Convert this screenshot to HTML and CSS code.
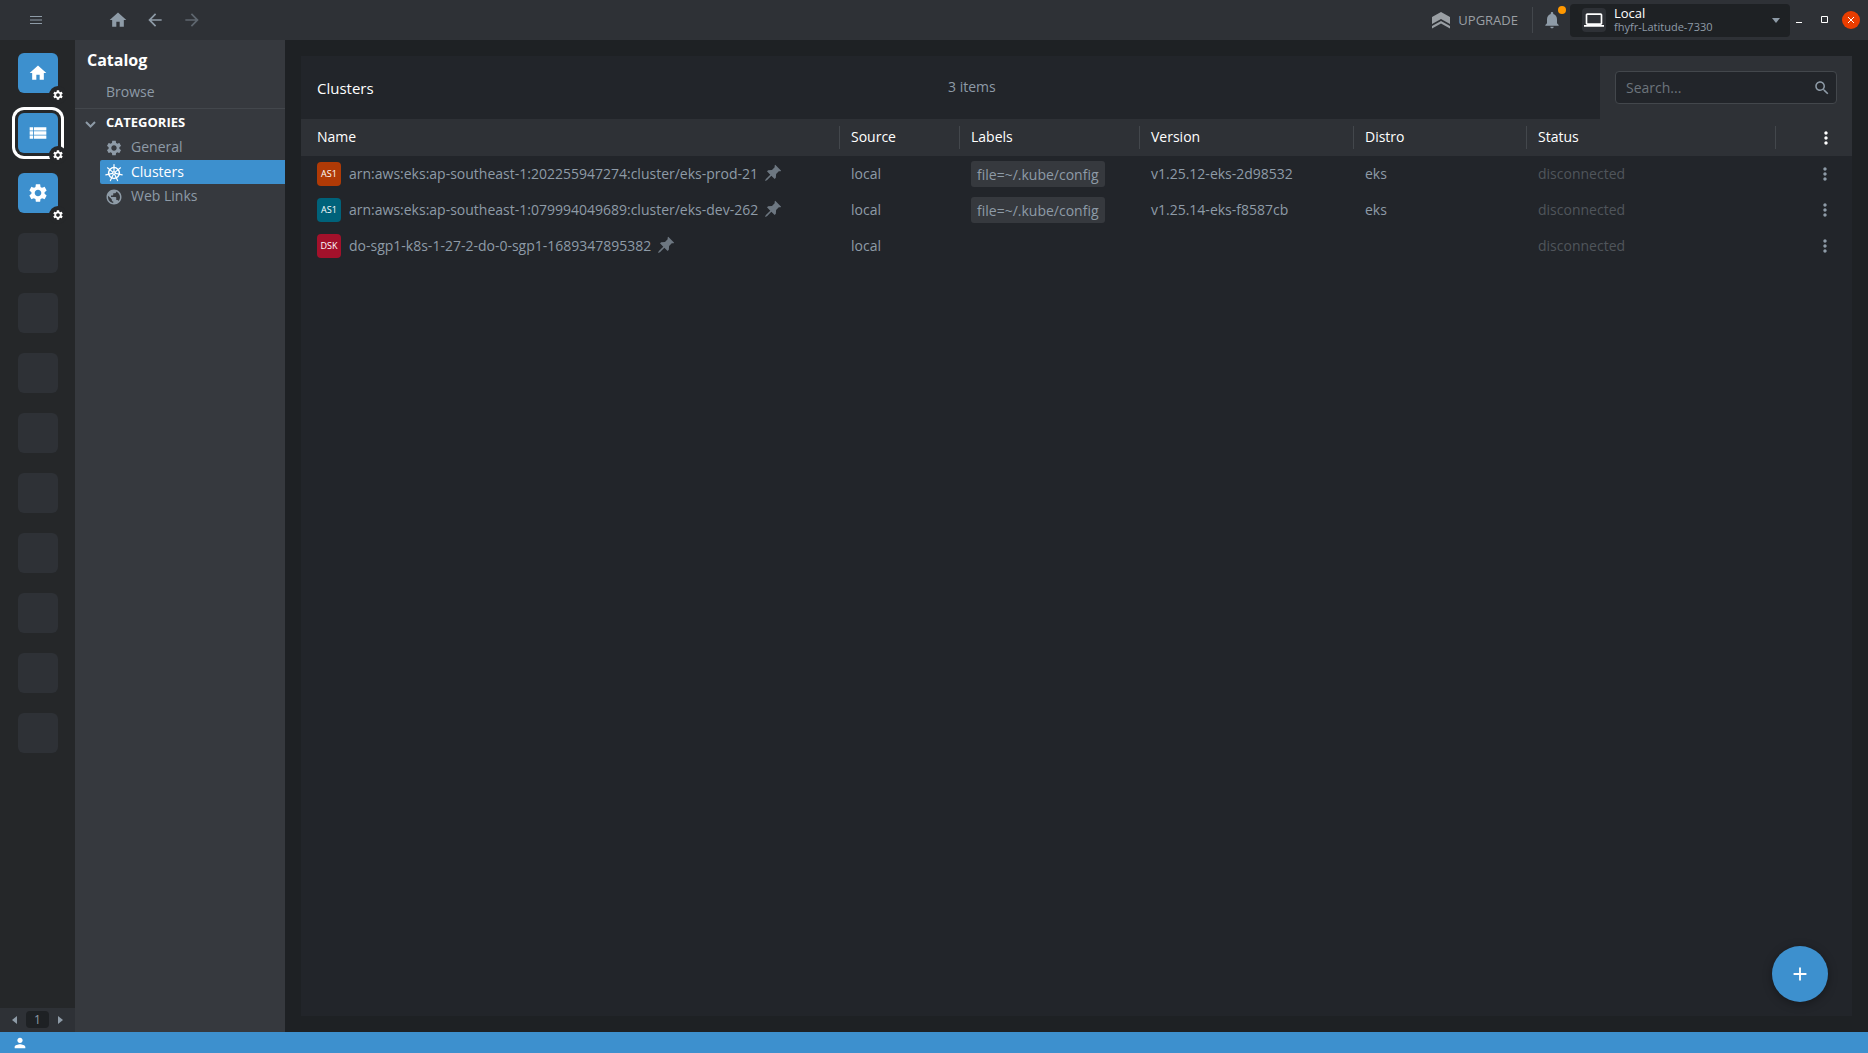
FILE: index.html
```html
<!DOCTYPE html>
<html lang="en">
<head>
<meta charset="utf-8">
<title>Catalog - Clusters</title>
<link rel="stylesheet" href="styles.css">
</head>
<body>
<svg class="defs" aria-hidden="true">
  <symbol id="home" viewBox="0 0 24 24"><path d="M10 20v-6h4v6h5v-8h3L12 3 2 12h3v8z"/></symbol>
  <symbol id="gear" viewBox="0 0 24 24"><path d="M19.14 12.94c.04-.3.06-.61.06-.94 0-.32-.02-.64-.07-.94l2.03-1.58c.18-.14.23-.41.12-.61l-1.92-3.32c-.12-.22-.37-.29-.59-.22l-2.39.96c-.5-.38-1.03-.7-1.62-.94l-.36-2.54c-.04-.24-.24-.41-.48-.41h-3.84c-.24 0-.43.17-.47.41l-.36 2.54c-.59.24-1.13.57-1.62.94l-2.39-.96c-.22-.08-.47 0-.59.22L2.74 8.87c-.12.21-.08.47.12.61l2.03 1.58c-.05.3-.09.63-.09.94s.02.64.07.94l-2.03 1.58c-.18.14-.23.41-.12.61l1.92 3.32c.12.22.37.29.59.22l2.39-.96c.5.38 1.03.7 1.62.94l.36 2.54c.05.24.24.41.48.41h3.84c.24 0 .44-.17.47-.41l.36-2.54c.59-.24 1.13-.56 1.62-.94l2.39.96c.22.08.47 0 .59-.22l1.92-3.32c.12-.22.07-.47-.12-.61l-2.01-1.58zM12 15.6c-1.98 0-3.6-1.62-3.6-3.6s1.62-3.6 3.6-3.6 3.6 1.62 3.6 3.6-1.62 3.6-3.6 3.6z"/></symbol>
  <symbol id="list" viewBox="0 0 24 24"><path d="M2 9h4V5H2v4zm0 5h4v-4H2v4zm0 5h4v-4H2v4zm5-5h15v-4H7v4zm0 5h15v-4H7v4zM7 5v4h15V5H7z"/></symbol>
  <symbol id="pin" viewBox="0 0 24 24"><path transform="rotate(45 12 12)" d="M15.500 8.500V4l1.500-1.500V1.500H7v1L8.500 4v4.500L5.500 12v2h5.600v7.500L12 24l.900-2.500V14h5.600v-2z"/></symbol>
  <symbol id="more" viewBox="0 0 24 24"><path d="M12 8c1.1 0 2-.9 2-2s-.9-2-2-2-2 .9-2 2 .9 2 2 2zm0 2c-1.1 0-2 .9-2 2s.9 2 2 2 2-.9 2-2-.9-2-2-2zm0 6c-1.1 0-2 .9-2 2s.9 2 2 2 2-.9 2-2-.9-2-2-2z"/></symbol>
</svg>
<div class="app">
  <header class="topbar">
    <button class="icon-btn menu-btn" aria-label="Menu"><svg class="i12" viewBox="0 0 12 8"><path d="M0 .5h12M0 4h12M0 7.500h12" fill="none" stroke="currentColor"/></svg></button>
    <nav class="history">
      <button class="icon-btn" aria-label="Home"><svg class="i20"><use href="#home"/></svg></button>
      <button class="icon-btn" aria-label="Back"><svg class="i20" viewBox="0 0 24 24"><path d="M20 11H7.830l5.590-5.590L12 4l-8 8 8 8 1.410-1.410L7.830 13H20v-2z"/></svg></button>
      <button class="icon-btn dim" aria-label="Forward"><svg class="i20" viewBox="0 0 24 24"><path d="M12 4l-1.410 1.410L16.170 11H4v2h12.170l-5.580 5.590L12 20l8-8z"/></svg></button>
    </nav>
    <button class="icon-btn upgrade"><svg class="i20" viewBox="0 0 20 20"><path d="M10 2l9 5v7l-9-5-9 5V7z"/><path d="M10 11l9 5v2.500l-9-5-9 5V16z"/></svg><span>UPGRADE</span></button>
    <button class="icon-btn bell" aria-label="Notifications"><svg class="i20" viewBox="0 0 24 24"><path d="M12 22c1.100 0 2-.900 2-2h-4c0 1.100.900 2 2 2zm6-6v-5c0-3.070-1.630-5.640-4.500-6.320V4c0-.830-.670-1.500-1.500-1.500s-1.500.670-1.500 1.500v.680C7.640 5.360 6 7.920 6 11v5l-2 2v1h16v-1l-2-2z"/></svg><i class="dot"></i></button>
    <button class="host">
      <span class="host-icon"><svg class="i20" viewBox="0 0 24 24"><path d="M20 18c1.100 0 1.990-.900 1.990-2L22 6c0-1.100-.900-2-2-2H4c-1.100 0-2 .900-2 2v10c0 1.100.900 2 2 2H0v2h24v-2h-4zM4 6h16v10H4V6z"/></svg></span>
      <span class="host-text"><span class="host-name">Local</span><span class="host-sub">fhyfr-Latitude-7330</span></span>
      <svg class="caret" viewBox="0 0 8 5"><path d="M0 0h8L4 5z"/></svg>
    </button>
    <div class="window-controls">
      <button class="icon-btn" aria-label="Minimize"><svg class="i8" viewBox="0 0 8 8"><path d="M1 6h6v1H1z"/></svg></button>
      <button class="icon-btn maximize" aria-label="Maximize"><svg class="i8" viewBox="0 0 8 8"><path d="M.500.500h6v6h-6z" fill="none" stroke="currentColor"/></svg></button>
      <button class="icon-btn close" aria-label="Close"><svg class="i8" viewBox="0 0 8 8"><path d="M1 1l6 6M7 1L1 7" fill="none" stroke="currentColor"/></svg></button>
    </div>
  </header>

  <div class="body">
    <aside class="hotbar">
      <div class="hotbar-items">
        <div class="slot"><button class="tile" aria-label="Welcome"><svg class="i20"><use href="#home"/></svg></button><span class="badge"><svg class="i12"><use href="#gear"/></svg></span></div>
        <div class="slot"><button class="tile active" aria-label="Catalog"><svg class="i20"><use href="#list"/></svg></button><span class="badge"><svg class="i12"><use href="#gear"/></svg></span></div>
        <div class="slot"><button class="tile" aria-label="Preferences"><svg class="i22"><use href="#gear"/></svg></button><span class="badge"><svg class="i12"><use href="#gear"/></svg></span></div>
        <div class="slot empty"></div><div class="slot empty"></div><div class="slot empty"></div>
        <div class="slot empty"></div><div class="slot empty"></div><div class="slot empty"></div>
        <div class="slot empty"></div><div class="slot empty"></div><div class="slot empty"></div>
      </div>
      <div class="pager">
        <button class="icon-btn" aria-label="Previous"><svg class="arrow" viewBox="0 0 5 8"><path d="M5 0v8L0 4z"/></svg></button>
        <span class="page">1</span>
        <button class="icon-btn" aria-label="Next"><svg class="arrow" viewBox="0 0 5 8"><path d="M0 0v8l5-4z"/></svg></button>
      </div>
    </aside>

    <nav class="sidebar">
      <h1>Catalog</h1>
      <a class="browse" href="#">Browse</a>
      <button class="group"><svg class="i16" viewBox="0 0 16 16"><path d="M3 8l4.500 4.500L12 8" fill="none" stroke="currentColor" stroke-width="2"/></svg><span>CATEGORIES</span></button>
      <ul>
        <li><a href="#"><svg class="i18"><use href="#gear"/></svg>General</a></li>
        <li><a class="selected" href="#"><svg class="i18" viewBox="0 0 18 18"><g fill="none" stroke="currentColor" stroke-linecap="round"><circle cx="9" cy="9" r="5.400" stroke-width="1.500"/><circle cx="9" cy="9" r="1.300"/><path stroke-width="1.200" d="M9 7.500V.600M10.200 8.100l5.300-4.300M10.500 9.300l6.700 1.600M9.700 10.400l2.900 6.200M8.300 10.400l-2.900 6.200M7.500 9.300L.800 10.900M7.800 8.100L2.500 3.800"/></g></svg>Clusters</a></li>
        <li><a href="#"><svg class="i18" viewBox="0 0 24 24"><path d="M12 2C6.480 2 2 6.480 2 12s4.480 10 10 10 10-4.480 10-10S17.520 2 12 2zm-1 17.930c-3.950-.490-7-3.850-7-7.930 0-.620.080-1.210.210-1.790L9 15v1c0 1.100.900 2 2 2v1.930zm6.900-2.540c-.260-.810-1-1.390-1.900-1.390h-1v-3c0-.550-.450-1-1-1H8v-2h2c.550 0 1-.450 1-1V7h2c1.100 0 2-.900 2-2v-.410c2.930 1.190 5 4.060 5 7.410 0 2.080-.800 3.970-2.100 5.390z"/></svg>Web Links</a></li>
      </ul>
    </nav>

    <main>
      <section class="panel">
        <div class="panel-head">
          <h2>Clusters</h2>
          <span class="count">3 items</span>
          <div class="search-area"><label class="search"><input type="text" placeholder="Search..." aria-label="Search"><svg class="i18" viewBox="0 0 24 24"><path d="M15.500 14h-.790l-.280-.270C15.410 12.590 16 11.110 16 9.500 16 5.910 13.090 3 9.500 3S3 5.910 3 9.500 5.910 16 9.500 16c1.610 0 3.090-.590 4.230-1.570l.270.280v.790l5 4.990L20.490 19l-4.990-5zm-6 0C7.010 14 5 11.990 5 9.500S7.010 5 9.500 5 14 7.010 14 9.500 11.990 14 9.500 14z"/></svg></label></div>
        </div>
        <table>
          <colgroup><col><col class="c-source"><col class="c-labels"><col class="c-version"><col class="c-distro"><col class="c-status"><col class="c-menu"></colgroup>
          <thead><tr><th><span>Name</span></th><th><span>Source</span></th><th><span>Labels</span></th><th><span>Version</span></th><th><span>Distro</span></th><th><span>Status</span></th><th><span class="menu-cell"><button class="icon-btn" aria-label="Columns"><svg class="i20"><use href="#more"/></svg></button></span></th></tr></thead>
          <tbody>
            <tr>
              <td><div class="name"><span class="avatar orange">AS1</span>arn:aws:eks:ap-southeast-1:202255947274:cluster/eks-prod-21<button class="icon-btn pin" aria-label="Pin"><svg class="i20"><use href="#pin"/></svg></button></div></td>
              <td>local</td><td><span class="label">file=~/.kube/config</span></td><td>v1.25.12-eks-2d98532</td><td>eks</td><td class="off">disconnected</td>
              <td><div class="menu-cell"><button class="icon-btn" aria-label="Actions"><svg class="i20"><use href="#more"/></svg></button></div></td>
            </tr>
            <tr>
              <td><div class="name"><span class="avatar teal">AS1</span>arn:aws:eks:ap-southeast-1:079994049689:cluster/eks-dev-262<button class="icon-btn pin" aria-label="Pin"><svg class="i20"><use href="#pin"/></svg></button></div></td>
              <td>local</td><td><span class="label">file=~/.kube/config</span></td><td>v1.25.14-eks-f8587cb</td><td>eks</td><td class="off">disconnected</td>
              <td><div class="menu-cell"><button class="icon-btn" aria-label="Actions"><svg class="i20"><use href="#more"/></svg></button></div></td>
            </tr>
            <tr>
              <td><div class="name"><span class="avatar red">DSK</span>do-sgp1-k8s-1-27-2-do-0-sgp1-1689347895382<button class="icon-btn pin" aria-label="Pin"><svg class="i20"><use href="#pin"/></svg></button></div></td>
              <td>local</td><td></td><td></td><td></td><td class="off">disconnected</td>
              <td><div class="menu-cell"><button class="icon-btn" aria-label="Actions"><svg class="i20"><use href="#more"/></svg></button></div></td>
            </tr>
          </tbody>
        </table>
        <button class="fab" aria-label="Add"><svg class="i22" viewBox="0 0 24 24"><path d="M19 13h-6v6h-2v-6H5v-2h6V5h2v6h6v2z"/></svg></button>
      </section>
    </main>
  </div>

  <footer class="statusbar"><button class="icon-btn" aria-label="Account"><svg class="i16" viewBox="0 0 24 24"><path d="M12 12c2.210 0 4-1.790 4-4s-1.790-4-4-4-4 1.790-4 4 1.790 4 4 4zm0 2c-2.670 0-8 1.340-8 4v2h16v-2c0-2.660-5.330-4-8-4z"/></svg></button></footer>
</div>
</body>
</html>
```
FILE: styles.css
```css
:root {
  --blue: #3d90ce;
  --bg: #1e2124;
  --panel: #22252a;
  --layout: #2e3136;
  --sidebar: #36393e;
  --border: #43474c;
  --text: #8e9ba7;
}

* { box-sizing: border-box; }

body {
  margin: 0;
  background: var(--bg);
  color: var(--text);
  font: 14px/20px "Open Sans", "Noto Sans", sans-serif;
}

button, input { font: inherit; color: inherit; }
svg { display: block; flex: none; fill: currentColor; }
a { color: inherit; text-decoration: none; }

.defs { position: absolute; width: 0; height: 0; }
.i8 { width: 8px; height: 8px; }
.i12 { width: 12px; height: 12px; }
.i16 { width: 16px; height: 16px; }
.i18 { width: 18px; height: 18px; }
.i20 { width: 20px; height: 20px; }
.i22 { width: 22px; height: 22px; }

.icon-btn {
  display: flex;
  align-items: center;
  justify-content: center;
  padding: 0;
  border: 0;
  background: none;
}

.app { display: flex; flex-direction: column; height: 100vh; }

/* top bar */
.topbar { display: flex; align-items: center; height: 40px; background: var(--layout); }
.menu-btn { width: 72px; height: 40px; }
.history { display: flex; gap: 17px; margin: 0 auto 0 36px; }
.dim { opacity: 0.5; }
.upgrade { gap: 7px; height: 26px; padding-right: 14px; border-right: 1px solid var(--border); color: #9a9fa4; font-size: 13px; }
.bell { position: relative; width: 37px; height: 40px; }
.dot { position: absolute; top: 6px; right: 4px; width: 8px; height: 8px; border-radius: 50%; background: #ff9800; }
.host {
  display: flex;
  align-items: center;
  gap: 8px;
  width: 220px;
  height: 33px;
  padding: 0 10px 0 12px;
  border: 0;
  border-radius: 4px;
  background: var(--bg);
  text-align: left;
}
.host-icon { display: flex; align-items: center; justify-content: center; width: 24px; height: 24px; border-radius: 4px; background: var(--layout); color: #fff; }
.host-text { display: flex; flex: 1; flex-direction: column; line-height: 14px; }
.host-name { color: #fff; font-size: 13px; font-weight: 500; }
.host-sub { font-size: 11px; }
.caret { width: 8px; height: 5px; }
.window-controls { display: flex; align-items: center; width: 78px; color: #fff; }
.window-controls .icon-btn { width: 18px; height: 18px; }
.window-controls .maximize { margin: 0 8px; }
.window-controls .close { margin-left: auto; margin-right: 8px; border-radius: 50%; background: #e93d00; }

.body { display: flex; flex: 1; min-height: 0; }

/* hotbar */
.hotbar { display: flex; flex-direction: column; justify-content: space-between; width: 75px; background: #252729; }
.hotbar-items { display: flex; flex-direction: column; gap: 20px; padding: 13px 17px 0 18px; }
.slot { position: relative; width: 40px; height: 40px; border-radius: 6px; }
.empty { background: var(--layout); }
.tile { display: flex; align-items: center; justify-content: center; width: 40px; height: 40px; padding: 0; border: 0; border-radius: 6px; background: var(--blue); color: #fff; }
.active { box-shadow: 0 0 0 3px #252729, 0 0 0 6px #fff; }
.badge { position: absolute; right: -9px; bottom: -11px; display: flex; align-items: center; justify-content: center; width: 18px; height: 18px; border-radius: 50%; background: #252729; color: #fff; }
.pager { display: flex; align-items: center; justify-content: center; gap: 9px; height: 24px; padding-bottom: 1px; background: var(--layout); }
.page { width: 23px; border-radius: 4px; background: var(--bg); font-size: 12px; line-height: 17px; text-align: center; }
.arrow { width: 5px; height: 8px; }

/* sidebar */
.sidebar { width: 210px; background: var(--sidebar); }
.sidebar h1 { margin: 0; padding: 8px 12px; color: #fff; font-size: 16px; line-height: 24px; }
.browse { display: block; height: 29px; padding: 2px 31px 0; border-bottom: 1px solid var(--border); }
.group { display: flex; align-items: center; gap: 7px; width: 100%; height: 26px; padding: 0 8px; border: 0; background: none; text-align: left; }
.group span { color: #fff; font-size: 13px; font-weight: 700; }
.sidebar ul { margin: 0; padding: 0 0 0 25px; list-style: none; }
.sidebar li:first-child { padding-bottom: 1px; }
.sidebar li a { display: flex; align-items: center; gap: 8px; height: 24px; padding-left: 5px; border-radius: 2px 0 0 2px; }
.sidebar li svg { margin-top: 2px; }
.sidebar .selected { background: var(--blue); color: #fff; }

/* catalog table */
main { display: flex; flex: 1; min-width: 0; padding: 16px; }
.panel { position: relative; flex: 1; min-width: 0; background: var(--panel); }
.panel-head { display: flex; align-items: center; height: 63px; padding-left: 16px; }
.panel-head h2 { margin: 0; color: #fff; font-size: 15px; font-weight: 400; }
.count { flex: 1; margin-right: 30px; padding-bottom: 2px; text-align: center; }
.search-area { align-self: stretch; width: 252px; padding: 15px; background: var(--layout); }
.search { display: flex; align-items: center; height: 33px; padding: 0 5px 0 10px; border: 1px solid var(--border); border-radius: 4px; background: var(--panel); }
.search input { flex: 1; min-width: 0; padding: 0; border: 0; outline: 0; background: none; }
.search input::placeholder { color: #6c747c; opacity: 1; }

table { width: 100%; border-collapse: collapse; table-layout: fixed; }
.c-source { width: 120px; }
.c-labels { width: 180px; }
.c-version { width: 214px; }
.c-distro { width: 173px; }
.c-status { width: 249px; }
.c-menu { width: 77px; }
th { height: 37px; padding: 0; background: var(--layout); color: #fff; font-weight: 500; text-align: left; }
th > span { display: block; height: 23px; padding-left: 11px; border-left: 1px solid var(--border); line-height: 22px; }
th:first-child > span { padding-left: 16px; border-left: 0; }
td { height: 36px; padding: 0 0 0 12px; white-space: nowrap; }
td:first-child { padding-left: 16px; }
td:last-child, th:last-child > span { padding: 0; }
.menu-cell .icon-btn { width: 100%; height: 23px; padding-left: 23px; }
.name { display: flex; align-items: center; }
.avatar { width: 24px; height: 24px; margin-right: 8px; border-radius: 4px; color: #fff; font-size: 9px; font-weight: 500; line-height: 24px; text-align: center; }
.orange { background: #b03a06; }
.teal { background: #00627a; }
.red { background: #a3112b; }
.pin { margin-left: 4px; opacity: 0.7; }
.label { display: inline-block; height: 26px; padding: 0 6px; border-radius: 3px; background: var(--sidebar); line-height: 28px; vertical-align: middle; }
.off { color: #50555b; }

.fab { position: absolute; right: 24px; bottom: 14px; display: flex; align-items: center; justify-content: center; width: 56px; height: 56px; padding: 0; border: 0; border-radius: 50%; background: var(--blue); color: #fff; box-shadow: 0 2px 10px rgba(0, 0, 0, 0.35); }

.statusbar { display: flex; align-items: center; height: 21px; padding-left: 12px; background: var(--blue); color: #fff; }
```
